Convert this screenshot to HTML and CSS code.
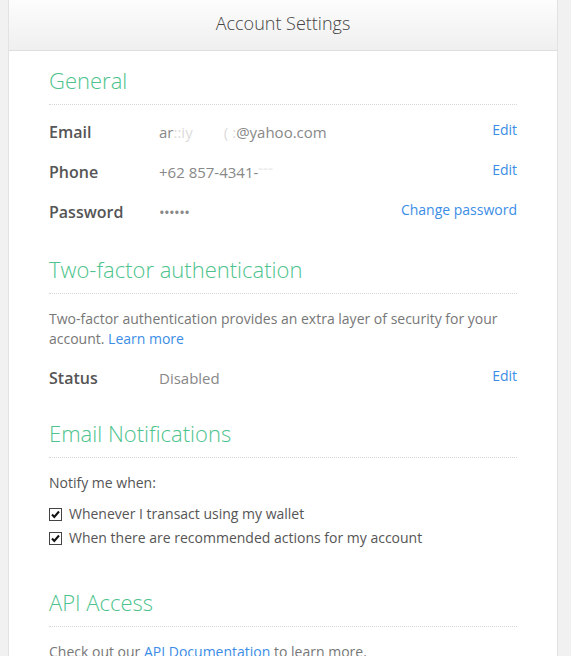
FILE: index.html
```html
<!DOCTYPE html>
<html>
<head>
<meta charset="utf-8">
<link rel="stylesheet" href="styles.css">
</head>
<body>
<div class="card">
  <div class="header">Account Settings</div>
  <div class="content">
    <section class="section first">
      <h2 class="heading">General</h2>
      <div class="rows">
        <div class="row">
          <span class="label">Email</span>
          <span class="value">ar<span class="faint">::iy</span>&nbsp;&nbsp;&nbsp;&nbsp;&nbsp;&nbsp;&nbsp;&nbsp;<span class="faint">(</span>&nbsp;<span class="faint">:</span>@yahoo.com</span>
          <a class="action" href="#">Edit</a>
        </div>
        <div class="row">
          <span class="label">Phone</span>
          <span class="value">+62 857-4341-<span class="faint">&#8315;&#8315;&#8315;</span></span>
          <a class="action" href="#">Edit</a>
        </div>
        <div class="row">
          <span class="label">Password</span>
          <span class="value dots">&bull;&bull;&bull;&bull;&bull;&bull;</span>
          <a class="action" href="#">Change password</a>
        </div>
      </div>
    </section>
    <section class="section">
      <h2 class="heading">Two-factor authentication</h2>
      <p class="text">Two-factor authentication provides an extra layer of security for your account. <a href="#">Learn more</a></p>
      <div class="row status">
        <span class="label">Status</span>
        <span class="value">Disabled</span>
        <a class="action" href="#">Edit</a>
      </div>
    </section>
    <section class="section notifications">
      <h2 class="heading">Email Notifications</h2>
      <p class="notify">Notify me when:</p>
      <ul class="checks">
        <li><span class="box"><svg width="11" height="11" viewBox="0 0 11 11"><path d="M2 5.5 L4.3 8 L9 2.5" fill="none" stroke="#111" stroke-width="2"/></svg></span>Whenever I transact using my wallet</li>
        <li><span class="box"><svg width="11" height="11" viewBox="0 0 11 11"><path d="M2 5.5 L4.3 8 L9 2.5" fill="none" stroke="#111" stroke-width="2"/></svg></span>When there are recommended actions for my account</li>
      </ul>
    </section>
    <section class="section api">
      <h2 class="heading">API Access</h2>
      <p class="text">Check out our <a href="#">API Documentation</a> to learn more.</p>
    </section>
  </div>
</div>
</body>
</html>
```
FILE: styles.css
```css
html, body {
  margin: 0;
  padding: 0;
  background: #f1f1f1;
}
body {
  font-family: "Open Sans", "Liberation Sans", sans-serif;
  color: #555;
  height: 656px;
  overflow: hidden;
}
.card {
  margin-left: 8px;
  width: 548px;
  background: #fff;
  border-left: 1px solid #e2e2e2;
  border-right: 1px solid #e2e2e2;
  min-height: 700px;
}
.header {
  height: 50px;
  border-bottom: 1px solid #dedede;
  background: linear-gradient(#fdfdfd, #efefef);
  text-align: center;
  font-size: 18px;
  font-weight: 300;
  line-height: 46px;
  color: #444;
}
.content {
  padding: 0 40px;
}
.section {
  padding-top: 30px;
}
.section.first {
  padding-top: 14px;
}
.section.notifications {
  padding-top: 28px;
}
.heading {
  margin: 0;
  font-size: 22px;
  line-height: 30px;
  font-weight: 300;
  color: #4cc38c;
  padding-bottom: 9px;
  border-bottom: 1px dotted #d6d6d6;
}
.rows {
  margin-top: 15px;
  display: flex;
  flex-direction: column;
  gap: 16px;
}
.row {
  display: flex;
  align-items: flex-start;
  height: 24px;
}
.label {
  width: 110px;
  font-size: 16px;
  line-height: 24px;
  font-weight: 600;
  color: #555;
}
.value {
  flex: 1;
  font-size: 15px;
  line-height: 24px;
  color: #888;
}
.value.dots {
  font-size: 15px;
  letter-spacing: -0.6px;
}
.faint {
  color: #dcdcdc;
}
.action {
  font-size: 14px;
  line-height: 20px;
  color: #3b8de6;
  text-decoration: none;
}
a {
  color: #3b8de6;
  text-decoration: none;
}
.text {
  margin: 15px 0 0;
  font-size: 14px;
  line-height: 20px;
  color: #777;
}
.status {
  margin-top: 17px;
}
.notify {
  margin: 15px 0 0;
  font-size: 14px;
  line-height: 20px;
  color: #555;
}
.checks {
  list-style: none;
  margin: 9px 0 0;
  padding: 0;
  padding-bottom: 7px;
}
.checks li {
  display: flex;
  align-items: center;
  font-size: 14px;
  line-height: 20px;
  height: 24px;
  color: #555;
}
.box {
  width: 11px;
  height: 11px;
  border: 1px solid #444;
  background: #fff;
  margin-right: 7px;
  display: flex;
  align-items: center;
  justify-content: center;
  flex: none;
}
.box svg {
  display: block;
}
```
